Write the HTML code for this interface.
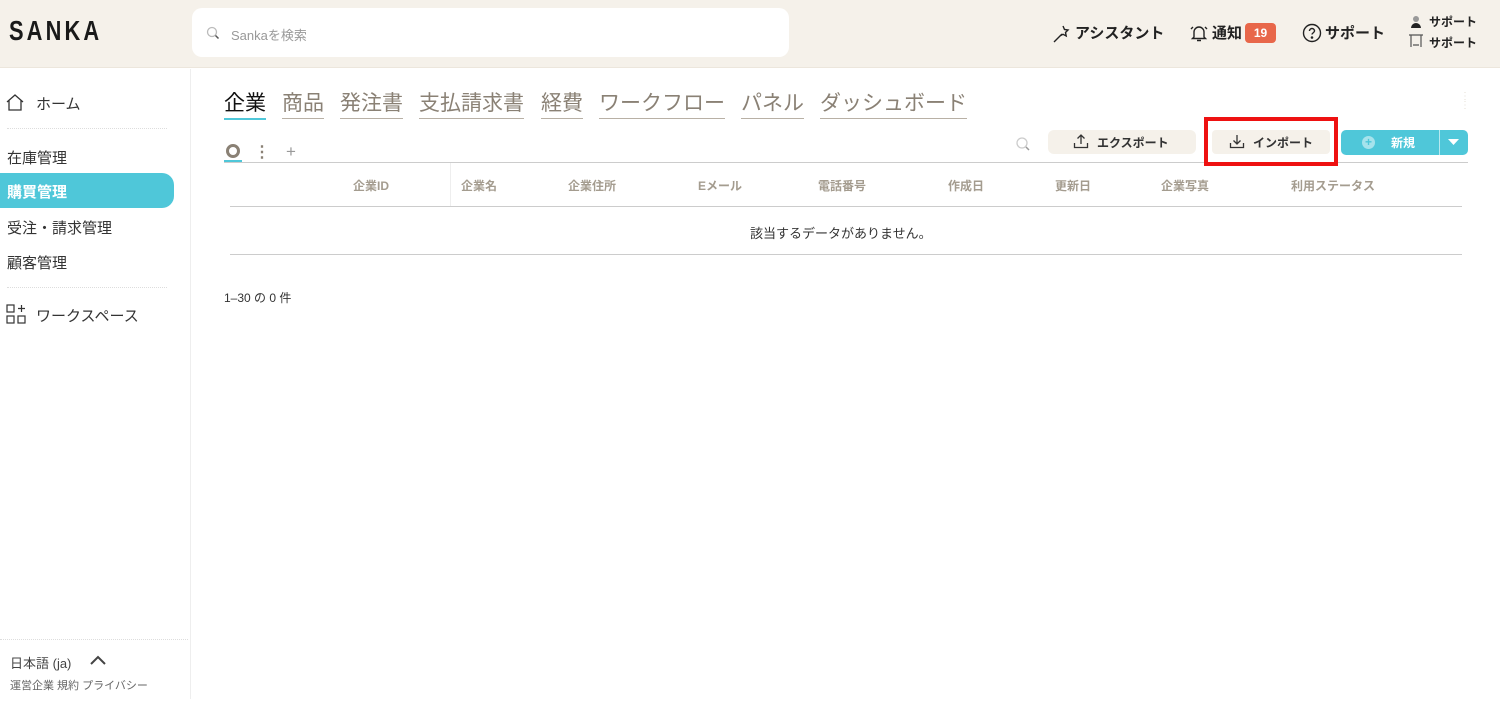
<!DOCTYPE html>
<html><head><meta charset="utf-8"><style>
*{margin:0;padding:0;box-sizing:border-box}
body{width:1500px;height:704px;overflow:hidden;background:#fff;font-family:"Liberation Sans","Noto Sans CJK JP",sans-serif;color:#222;position:relative}
.a{position:absolute;white-space:nowrap}
.hdr{left:0;top:0;width:1500px;height:68px;background:#f5f1ea;border-bottom:1px solid #ece6dc}
.tab{font-size:21px;color:#8a8175;border-bottom:1px solid #b8b0a5;padding-bottom:1px;top:87px}
.th{top:177px;font-size:12px;color:#a49c8f;font-weight:bold}
.nav{left:7px;font-size:15px;color:#333}
</style></head><body>
<div class="a hdr"></div>
<div class="a" style="left:9px;top:15px;font-size:28px;letter-spacing:4px;font-weight:bold;color:#1a1a1a;transform:scaleX(.78);transform-origin:left">SANKA</div>
<div class="a" style="left:192px;top:8px;width:597px;height:49px;background:#fff;border-radius:10px"></div>
<svg class="a" style="left:206px;top:26px" width="14" height="14" viewBox="0 0 14 14"><circle cx="6" cy="6" r="4.5" fill="none" stroke="#bbb" stroke-width="1.3"/><path d="M9.5 9.5L12.5 12.5" stroke="#555" stroke-width="1.5"/></svg>
<div class="a" style="left:231px;top:25px;font-size:13px;color:#999">Sankaを検索</div>
<svg class="a" style="left:1052px;top:24px" width="20" height="20" viewBox="0 0 20 20" fill="none" stroke="#222" stroke-width="1.4"><path d="M2 18L10 10M11 2l1.5 3.5 3.5.5-2.5 2.5.7 3.5-3.2-1.7L7.8 12"/></svg>
<div class="a" style="left:1075px;top:22px;font-size:15px;font-weight:bold">アシスタント</div>
<svg class="a" style="left:1189px;top:23px" width="20" height="20" viewBox="0 0 20 20" fill="none" stroke="#222" stroke-width="1.4"><path d="M5 14V9a5 5 0 0110 0v5l1.5 1.5h-13zM8 17.5h4M2 6l2-2M18 6l-2-2"/></svg>
<div class="a" style="left:1212px;top:22px;font-size:15px;font-weight:bold">通知</div>
<div class="a" style="left:1245px;top:23px;width:31px;height:20px;background:#e8674a;border-radius:4px;color:#fff;font-size:12px;font-weight:bold;text-align:center;line-height:20px">19</div>
<svg class="a" style="left:1302px;top:23px" width="20" height="20" viewBox="0 0 20 20" fill="none" stroke="#222" stroke-width="1.4"><circle cx="10" cy="10" r="8.5"/><path d="M7.5 8a2.5 2.5 0 115 0c0 1.5-2.5 2-2.5 3.5"/><circle cx="10" cy="14.5" r=".6" fill="#222"/></svg>
<div class="a" style="left:1325px;top:22px;font-size:15px;font-weight:bold">サポート</div>
<svg class="a" style="left:1408px;top:15px" width="16" height="36" viewBox="0 0 16 36"><circle cx="8" cy="4" r="3" fill="#999"/><path d="M3 13a5 5 0 0110 0z" fill="#222"/><path d="M1 20h14M3 20v12M13 20v12M5 30h6" stroke="#555" stroke-width="1.2" fill="none"/></svg>
<div class="a" style="left:1429px;top:13px;font-size:12px;font-weight:bold">サポート</div>
<div class="a" style="left:1429px;top:34px;font-size:12px;font-weight:bold">サポート</div>

<div class="a" style="left:190px;top:69px;width:1px;height:630px;background:#eee"></div>
<svg class="a" style="left:6px;top:94px" width="18" height="17" viewBox="0 0 18 17" fill="none" stroke="#333" stroke-width="1.3"><path d="M1 8L9 1l8 7M3 6.5V16h12V6.5"/></svg>
<div class="a nav" style="left:36px;top:93px">ホーム</div>
<div class="a" style="left:7px;top:128px;width:160px;border-top:1px dotted #ddd"></div>
<div class="a nav" style="top:147px">在庫管理</div>
<div class="a" style="left:0;top:173px;width:174px;height:35px;background:#4fc7d9;border-radius:0 12px 12px 0"></div>
<div class="a nav" style="top:181px;color:#fff;font-weight:bold">購買管理</div>
<div class="a nav" style="top:217px">受注・請求管理</div>
<div class="a nav" style="top:252px">顧客管理</div>
<div class="a" style="left:7px;top:287px;width:160px;border-top:1px dotted #ddd"></div>
<svg class="a" style="left:6px;top:304px" width="20" height="20" viewBox="0 0 20 20" fill="none" stroke="#333" stroke-width="1.2"><rect x="1" y="1" width="7" height="7"/><rect x="1" y="12" width="7" height="7"/><rect x="12" y="12" width="7" height="7"/><path d="M15.5 1v7M12 4.5h7"/></svg>
<div class="a nav" style="left:36px;top:305px">ワークスペース</div>
<div class="a" style="left:0;top:639px;width:188px;border-top:1px dotted #ddd"></div>
<div class="a" style="left:10px;top:653px;font-size:13px;color:#444">日本語 (ja)</div>
<svg class="a" style="left:89px;top:655px" width="18" height="11" viewBox="0 0 18 11"><path d="M2 9l7-7 7 7" fill="none" stroke="#444" stroke-width="2"/></svg>
<div class="a" style="left:10px;top:677px;font-size:11px;color:#666">運営企業 規約 プライバシー</div>

<div class="a tab" style="left:224px;color:#111;border-color:#4fc7d9;border-width:2px">企業</div>
<div class="a tab" style="left:282px">商品</div>
<div class="a tab" style="left:340px">発注書</div>
<div class="a tab" style="left:419px">支払請求書</div>
<div class="a tab" style="left:541px">経費</div>
<div class="a tab" style="left:599px">ワークフロー</div>
<div class="a tab" style="left:741px">パネル</div>
<div class="a tab" style="left:820px">ダッシュボード</div>
<div class="a" style="left:1460px;top:92px;font-size:10px;color:#e5e0d8;line-height:9px">⋮<br>⋮</div>

<div class="a" style="left:226px;top:144px;width:14px;height:14px;border:3px solid #8a8175;border-radius:50%"></div>
<div class="a" style="left:224px;top:160px;width:18px;height:2px;background:#4fc7d9"></div>
<div class="a" style="left:254px;top:142px;font-size:16px;color:#8a8175;font-weight:bold">⋮</div>
<div class="a" style="left:286px;top:142px;font-size:17px;color:#999">+</div>
<div class="a" style="left:224px;top:162px;width:1244px;height:1px;background:#ccc"></div>
<svg class="a" style="left:1015px;top:136px" width="16" height="16" viewBox="0 0 16 16"><circle cx="7" cy="7" r="5" fill="none" stroke="#ccc" stroke-width="1.3"/><path d="M11 11l3 3" stroke="#999" stroke-width="1.5"/></svg>
<div class="a" style="left:1048px;top:130px;width:148px;height:24px;background:#f5f1ea;border-radius:6px"></div>
<svg class="a" style="left:1073px;top:133px" width="16" height="16" viewBox="0 0 16 16" fill="none" stroke="#333" stroke-width="1.3"><path d="M8 11V2M4.5 5.5L8 2l3.5 3.5M1.5 10v4.5h13V10"/></svg>
<div class="a" style="left:1097px;top:134px;font-size:12px;font-weight:bold;color:#333">エクスポート</div>
<div class="a" style="left:1204px;top:117px;width:134px;height:49px;border:4px solid #ee1111"></div>
<div class="a" style="left:1212px;top:130px;width:118px;height:24px;background:#f5f1ea;border-radius:4px"></div>
<svg class="a" style="left:1229px;top:133px" width="16" height="16" viewBox="0 0 16 16" fill="none" stroke="#333" stroke-width="1.3"><path d="M8 2v9M4.5 7.5L8 11l3.5-3.5M1.5 10v4.5h13V10"/></svg>
<div class="a" style="left:1253px;top:134px;font-size:12px;font-weight:bold;color:#333">インポート</div>
<div class="a" style="left:1341px;top:130px;width:127px;height:25px;background:#4fc7d9;border-radius:5px"></div>
<div class="a" style="left:1439px;top:130px;width:1px;height:25px;background:#fff;opacity:.6"></div>
<div class="a" style="left:1362px;top:136px;width:13px;height:13px;border-radius:50%;background:#a6e3ec;color:#4fc7d9;font-size:12px;font-weight:bold;text-align:center;line-height:13px">+</div>
<div class="a" style="left:1391px;top:134px;font-size:12px;font-weight:bold;color:#fff">新規</div>
<svg class="a" style="left:1448px;top:139px" width="11" height="7" viewBox="0 0 11 7"><path d="M0 0h11L5.5 6z" fill="#fff"/></svg>

<div class="a" style="left:450px;top:163px;width:1px;height:43px;background:#eee"></div>
<div class="a th" style="left:353px">企業ID</div>
<div class="a th" style="left:461px">企業名</div>
<div class="a th" style="left:568px">企業住所</div>
<div class="a th" style="left:698px">Eメール</div>
<div class="a th" style="left:818px">電話番号</div>
<div class="a th" style="left:948px">作成日</div>
<div class="a th" style="left:1055px">更新日</div>
<div class="a th" style="left:1161px">企業写真</div>
<div class="a th" style="left:1291px">利用ステータス</div>
<div class="a" style="left:230px;top:206px;width:1232px;height:1px;background:#ccc"></div>
<div class="a" style="left:750px;top:223px;font-size:13px;color:#333">該当するデータがありません。</div>
<div class="a" style="left:230px;top:254px;width:1232px;height:1px;background:#ccc"></div>
<div class="a" style="left:224px;top:289px;font-size:12px;color:#333">1–30 の 0 件</div>
</body></html>
